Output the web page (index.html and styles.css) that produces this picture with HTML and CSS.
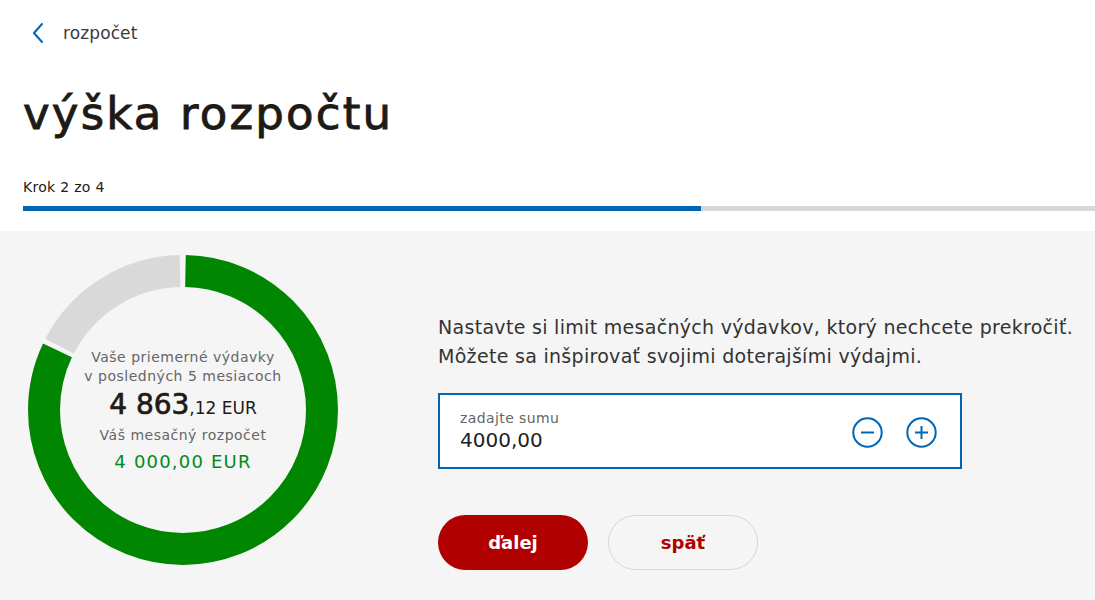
FILE: index.html
```html
<!DOCTYPE html>
<html lang="sk">
<head>
    <meta charset="utf-8" />
    <title>výška rozpočtu</title>
    <link rel="stylesheet" href="styles.css">
</head>
<body>
    <div class="top">
        <!--späť na rozpočet-->
        <a class="back" href="#">
            <svg class="back-icon" width="14" height="22" viewBox="0 0 14 22">
                <path d="M11 2 L3 11 L11 20" fill="none" stroke="#0066b3" stroke-width="2" stroke-linecap="round" stroke-linejoin="round" />
            </svg>
            <span>rozpočet</span>
        </a>
        <h1 class="title">výška rozpočtu</h1>
        <div class="step">Krok 2 zo 4</div>
        <div class="progress"><div class="progress-fill"></div></div>
    </div>

    <div class="panel">
        <!--graf-->
        <div class="chart">
            <svg class="donut" width="310" height="310" viewBox="0 0 310 310">
                <circle class="donut-used" cx="155" cy="155" r="139" />
                <circle class="donut-rest" cx="155" cy="155" r="139" />
            </svg>
            <div class="chart-text">
                <div class="chart-label">Vaše priemerné výdavky<br />v posledných 5 mesiacoch</div>
                <div class="chart-sum"><b>4 863</b>,12 EUR</div>
                <div class="chart-label">Váš mesačný rozpočet</div>
                <div class="chart-budget">4 000,00 EUR</div>
            </div>
        </div>

        <!--formulár-->
        <div class="form">
            <p class="intro">Nastavte si limit mesačných výdavkov, ktorý nechcete prekročiť.<br />Môžete sa inšpirovať svojimi doterajšími výdajmi.</p>
            <div class="amount">
                <div class="amount-field">
                    <div class="amount-label">zadajte sumu</div>
                    <div class="amount-value">4000,00</div>
                </div>
                <div class="amount-buttons">
                    <svg class="round-btn" width="31" height="31" viewBox="0 0 31 31">
                        <circle cx="15.5" cy="15.5" r="14.2" fill="none" stroke="#0066b3" stroke-width="2" />
                        <path d="M9 15.5 H22" stroke="#0066b3" stroke-width="2" />
                    </svg>
                    <svg class="round-btn" width="31" height="31" viewBox="0 0 31 31">
                        <circle cx="15.5" cy="15.5" r="14.2" fill="none" stroke="#0066b3" stroke-width="2" />
                        <path d="M9 15.5 H22 M15.5 9 V22" stroke="#0066b3" stroke-width="2" />
                    </svg>
                </div>
            </div>
            <div class="actions">
                <a class="btn btn-primary" href="#">ďalej</a>
                <a class="btn btn-secondary" href="#">späť</a>
            </div>
        </div>
    </div>
</body>
</html>
```

FILE: styles.css
```css
* {
    margin: 0;
    padding: 0;
    box-sizing: border-box;
}

body {
    font-family: "DejaVu Sans", "Noto Sans", sans-serif;
    color: #222;
    background-color: #fff;
}

a {
    text-decoration: none;
}

.top {
    padding-left: 23px;
    padding-top: 22px;
}

.back {
    display: flex;
    align-items: center;
    gap: 18px;
    padding-left: 8px;
    height: 22px;
    color: #3a3a3a;
    font-size: 17px;
    letter-spacing: 0.1px;
}

.title {
    margin-top: 42px;
    font-size: 45px;
    font-weight: 500;
    line-height: 56px;
    color: #1e1a16;
    letter-spacing: 2.2px;
    -webkit-text-stroke: 0.9px #1e1a16;
}

.step {
    margin-top: 36px;
    font-size: 14px;
    line-height: 18px;
    color: #1e1a16;
    letter-spacing: 0.3px;
}

.progress {
    margin-top: 10px;
    height: 5px;
    background-color: #d8d8d8;
}

    .progress-fill {
        width: 678px;
        height: 5px;
        background-color: #0066b3;
    }

.panel {
    margin-top: 20px;
    background-color: #f5f5f5;
    height: 369px;
    padding: 24px 0 0 28px;
    display: flex;
    gap: 100px;
}

.chart {
    position: relative;
    width: 310px;
    height: 310px;
    flex: none;
}

.donut {
    transform: rotate(-90deg);
    display: block;
}

    .donut circle {
        fill: none;
        stroke-width: 32;
    }

.donut-used {
    stroke: #008600;
    stroke-dasharray: 714 1000;
    stroke-dashoffset: -2.5;
}

.donut-rest {
    stroke: #d9d9d9;
    stroke-dasharray: 149 1000;
    stroke-dashoffset: -721;
}

.chart-text {
    position: absolute;
    left: 0;
    right: 0;
    top: 93px;
    text-align: center;
}

.chart-label {
    font-size: 14px;
    line-height: 19px;
    color: #666;
    letter-spacing: 0.5px;
}

.chart-sum {
    margin-top: 2px;
    font-size: 17px;
    line-height: 34px;
    color: #1e1a16;
    margin-bottom: 1px;
}

    .chart-sum b {
        font-size: 28px;
        font-weight: normal;
        -webkit-text-stroke: 0.7px #1e1a16;
    }

.chart-budget {
    margin-top: 5px;
    font-size: 18px;
    line-height: 24px;
    color: #008a1e;
    letter-spacing: 1.2px;
}

.form {
    padding-top: 58px;
}

.intro {
    font-size: 19px;
    line-height: 29px;
    color: #333;
    letter-spacing: 0.3px;
}

.amount {
    margin-top: 22px;
    width: 524px;
    height: 76px;
    border: 2px solid #0066b3;
    background-color: #fff;
    display: flex;
    align-items: center;
    justify-content: space-between;
    padding: 0 23px 0 20px;
}

.amount-label {
    font-size: 14px;
    line-height: 18px;
    color: #666;
    letter-spacing: 0.4px;
}

.amount-value {
    margin-top: 1px;
    font-size: 20px;
    line-height: 25px;
    color: #222;
}

.amount-buttons {
    display: flex;
    gap: 23px;
    margin-top: 2px;
}

.round-btn {
    display: block;
    cursor: pointer;
}

.actions {
    margin-top: 46px;
    display: flex;
    gap: 20px;
}

.btn {
    display: flex;
    align-items: center;
    justify-content: center;
    width: 150px;
    height: 55px;
    border-radius: 28px;
    font-size: 18px;
    font-weight: bold;
}

.btn-primary {
    background-color: #b00000;
    color: #fff;
}

.btn-secondary {
    border: 1px solid #d6d6d6;
    color: #b00000;
}
```
